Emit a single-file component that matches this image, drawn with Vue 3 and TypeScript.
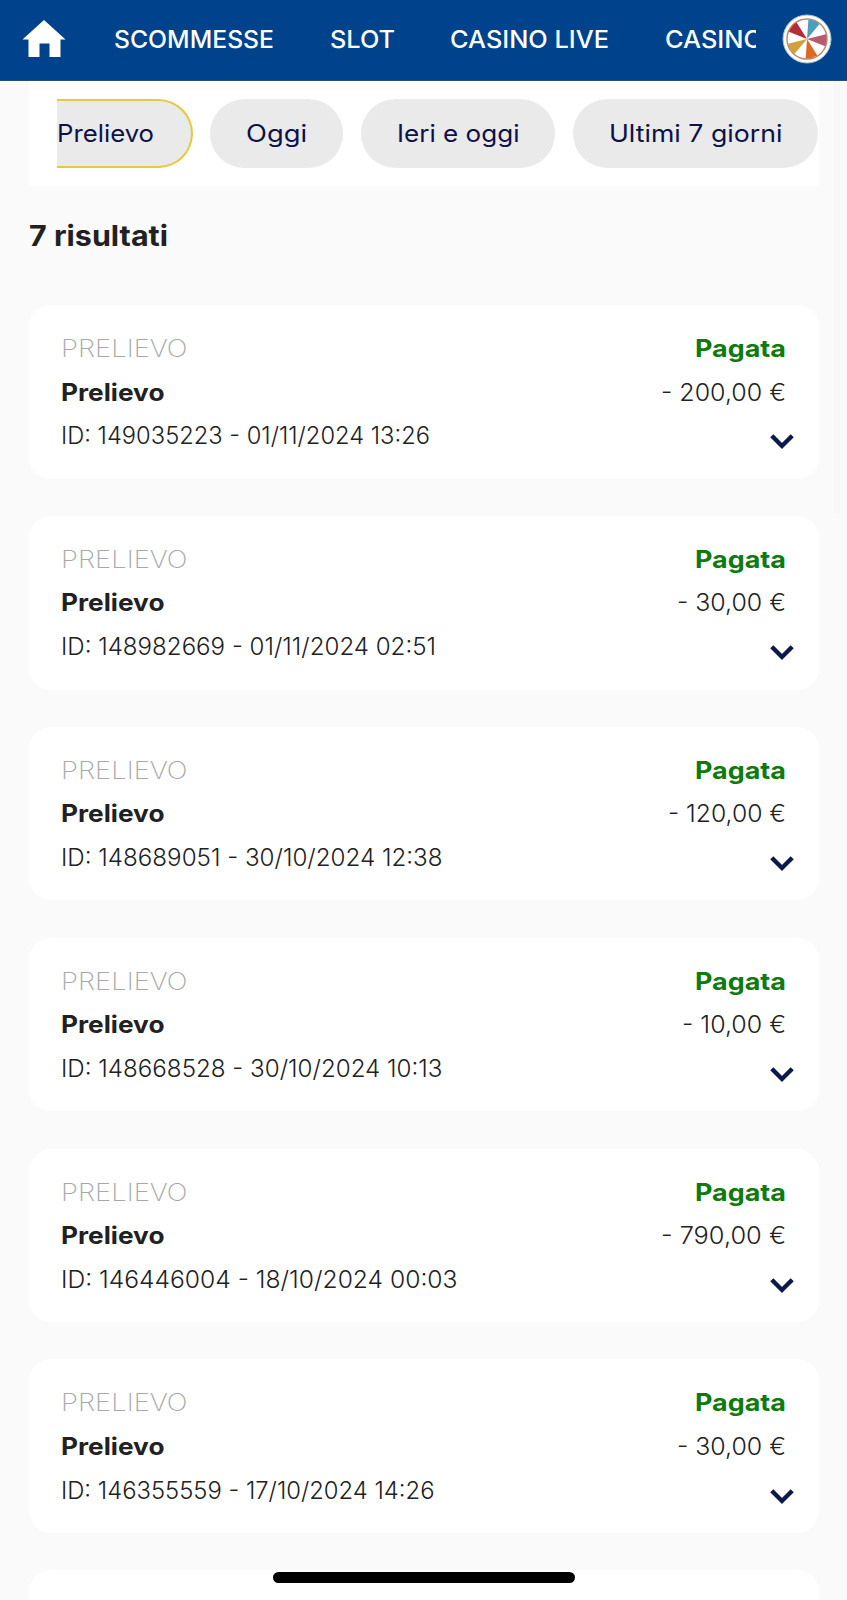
<script setup lang="ts">
interface Label {
  text: string
  width: number
}

interface Movement {
  id: Label
  amount: Label
}

const navItems: Label[] = [
  { text: 'SCOMMESSE', width: 160 },
  { text: 'SLOT', width: 65 },
  { text: 'CASINO LIVE', width: 159 },
  { text: 'CASINO', width: 98 },
]

const filters: Label[] = [
  { text: 'Oggi', width: 61 },
  { text: 'Ieri e oggi', width: 122.5 },
  { text: 'Ultimi 7 giorni', width: 173.5 },
]

const movements: Movement[] = [
  { id: { text: 'ID: 149035223 - 01/11/2024 13:26', width: 369 }, amount: { text: '- 200,00 €', width: 125 } },
  { id: { text: 'ID: 148982669 - 01/11/2024 02:51', width: 375 }, amount: { text: '- 30,00 €', width: 109 } },
  { id: { text: 'ID: 148689051 - 30/10/2024 12:38', width: 381.5 }, amount: { text: '- 120,00 €', width: 118 } },
  { id: { text: 'ID: 148668528 - 30/10/2024 10:13', width: 381.5 }, amount: { text: '- 10,00 €', width: 104 } },
  { id: { text: 'ID: 146446004 - 18/10/2024 00:03', width: 396.5 }, amount: { text: '- 790,00 €', width: 125 } },
  { id: { text: 'ID: 146355559 - 17/10/2024 14:26', width: 373.5 }, amount: { text: '- 30,00 €', width: 109 } },
]

const wedges = [
  { angle: 22, color: '#4b9fba' },
  { angle: 94, color: '#b75a72' },
  { angle: 166, color: '#da6a22' },
  { angle: 238, color: '#d0a03c' },
  { angle: 310, color: '#b42c34' },
]

// Widens a label's letterforms so that it fills the given width.
const vFit = {
  mounted(el: HTMLElement, binding: { value: number }) {
    const natural = el.getBoundingClientRect().width
    el.style.transform = `scaleX(${binding.value / natural})`
    el.style.marginRight = `${binding.value - natural}px`
  },
}
</script>

<template>
  <div class="page">
    <header class="topbar">
      <svg class="home" viewBox="0 0 44 38">
        <path d="M22 0 L43.5 19.5 H38.5 V37 H27.5 V23.5 H17.5 V37 H6.5 V19.5 H0.5 Z" fill="#fff" />
      </svg>
      <nav class="nav">
        <a v-for="item in navItems" :key="item.text" class="nav-item"><span v-fit="item.width" class="fit">{{ item.text }}</span></a>
      </nav>
      <svg class="wheel" viewBox="-25 -25 50 50">
        <circle r="24" fill="#fff" stroke="#9cc9c4" stroke-width="1" />
        <circle r="20" fill="#fff" stroke="#c9806a" stroke-width="1.4" />
        <path
          v-for="w in wedges"
          :key="w.angle"
          d="M0 0 L-6 -18.6 A19.5 19.5 0 0 1 6 -18.6 Z"
          :fill="w.color"
          :transform="`rotate(${w.angle})`"
        />
        <circle r="1.6" fill="#e7b5b0" />
      </svg>
    </header>

    <main class="content">
      <section class="filters">
        <div class="track">
          <button class="pill active"><span v-fit="97" class="fit">Prelievo</span></button>
          <button v-for="f in filters" :key="f.text" class="pill">
            <span v-fit="f.width" class="fit">{{ f.text }}</span>
          </button>
        </div>
      </section>

      <h1 class="count"><span v-fit="139" class="fit">7 risultati</span></h1>

      <section class="list">
        <article v-for="m in movements" :key="m.id.text" class="card">
          <div class="line">
            <span v-fit="126.5" class="fit kind">PRELIEVO</span>
            <span v-fit="91" class="fit status">Pagata</span>
          </div>
          <div class="line">
            <span v-fit="103.5" class="fit title">Prelievo</span>
            <span v-fit="m.amount.width" class="fit">{{ m.amount.text }}</span>
          </div>
          <div class="line">
            <span v-fit="m.id.width" class="fit">{{ m.id.text }}</span>
            <svg class="chevron" viewBox="0 0 24 16">
              <path d="M1.8 1.8 L12 12 L22.2 1.8" fill="none" stroke="#0b1a4a" stroke-width="4.4" />
            </svg>
          </div>
        </article>
        <article class="card"></article>
      </section>
    </main>

    <div class="scrollbar"></div>
    <div class="home-indicator"></div>
  </div>
</template>

<style>
html,
body {
  margin: 0;
  background: #fafafa;
}
</style>

<style scoped>
.page {
  position: relative;
  box-sizing: border-box;
  width: 100%;
  height: 1600px;
  overflow: hidden;
  background: #fafafa;
  color: #212121;
  font-family: Inter, "Liberation Sans", sans-serif;
  font-size: 24px;
  font-weight: 300;
}

.fit {
  display: block;
  flex: none;
  white-space: pre;
  transform-origin: left center;
}

.topbar {
  box-sizing: border-box;
  display: flex;
  align-items: center;
  height: 80.5px;
  padding: 0 14px 1px 22px;
  background: #00428c;
  border-bottom: 1px solid #2d4a6f;
}

.home {
  flex: none;
  width: 44px;
  height: 38px;
}

.nav {
  display: flex;
  flex: none;
  gap: 55.5px;
  box-sizing: border-box;
  width: 690px;
  padding: 1px 0 0 48px;
  overflow: hidden;
  color: #fff;
  font-weight: 500;
  line-height: 44px;
}

.nav-item {
  display: flex;
  flex: none;
}

.wheel {
  flex: none;
  width: 50px;
  height: 50px;
  margin-left: 26px;
}

.content {
  padding: 0 28.5px;
}

.filters {
  height: 105px;
  padding: 18px 0 0 28.5px;
  box-sizing: border-box;
  background: #fff;
}

.track {
  display: flex;
  gap: 17.5px;
  overflow: hidden;
}

.pill {
  display: flex;
  align-items: center;
  flex: none;
  box-sizing: border-box;
  height: 69.5px;
  padding: 0 36px;
  border: 0;
  border-radius: 35px;
  background: #eaeaea;
  color: #0d1247;
  font: inherit;
  font-weight: 400;
}

.pill.active {
  padding: 0 36.5px 0 0;
  border: 2px solid #e5c93f;
  border-left: 0;
  border-radius: 0 35px 35px 0;
}

.count {
  display: flex;
  box-sizing: border-box;
  height: 119.5px;
  margin: 0;
  padding-top: 25.5px;
  font-size: 28px;
  font-weight: 700;
  line-height: 50px;
}

.list {
  display: flex;
  flex-direction: column;
  gap: 37.2px;
}

.card {
  flex: none;
  box-sizing: border-box;
  height: 173.7px;
  padding: 22px 32.5px 0;
  border-radius: 22px;
  background: #fff;
}

.line {
  display: flex;
  justify-content: space-between;
  height: 43.6px;
  line-height: 43.6px;
}

.kind {
  color: #a8a8a8;
  font-weight: 200;
}

.title {
  font-weight: 700;
}

.status {
  color: #0f7a0f;
  font-weight: 700;
}

.chevron {
  width: 24px;
  height: 16px;
  margin: 20px -8px 0 0;
}

.scrollbar {
  position: absolute;
  top: 80.5px;
  left: 833.5px;
  width: 6px;
  height: 432px;
  background: #f7f7f7;
}

.home-indicator {
  position: absolute;
  bottom: 17px;
  left: 273px;
  width: 302px;
  height: 11px;
  border-radius: 6px;
  background: #000;
}
</style>
